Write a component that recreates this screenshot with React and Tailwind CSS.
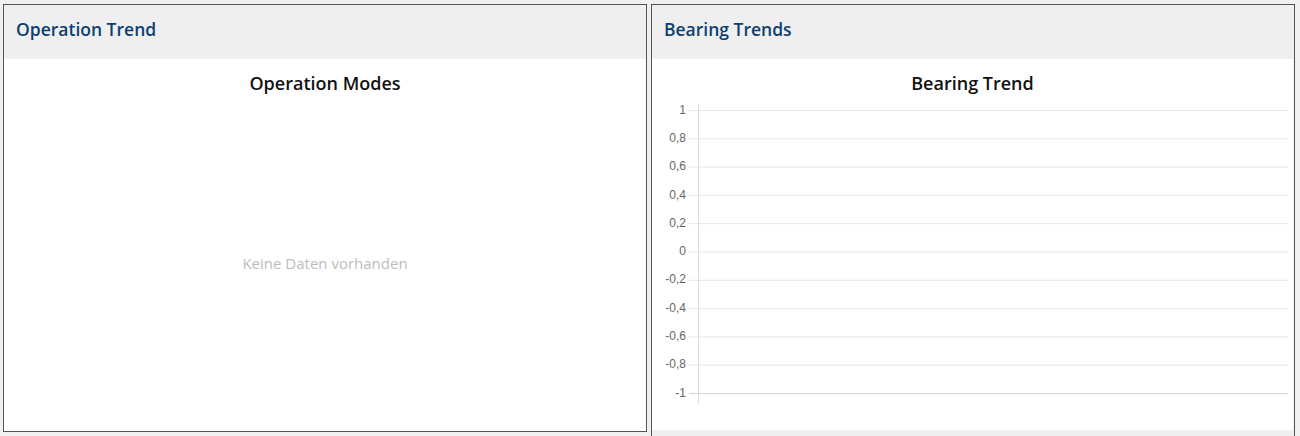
import React from "react";

const ticks = ["1", "0,8", "0,6", "0,4", "0,2", "0", "-0,2", "-0,4", "-0,6", "-0,8", "-1"];

function BearingChart() {
  return (
    <svg width="642" height="312" className="block">
      {ticks.map((t, i) => {
        const y = 10.5 + i * 28.3;
        return (
          <g key={t}>
            <line x1="37" x2="636" y1={y} y2={y} stroke={i === 10 ? "#d4d4d4" : "#e6e6e6"} strokeWidth="1" />
            <text
              x="34"
              y={y}
              textAnchor="end"
              dominantBaseline="middle"
              fill="#666"
              fontSize="12"
              fontFamily="'Liberation Sans', Arial, sans-serif"
            >
              {t}
            </text>
          </g>
        );
      })}
      <line x1="46.5" x2="46.5" y1="4" y2="304" stroke="#dcdcdc" strokeWidth="1" />
    </svg>
  );
}

function Card({ title, children, className }) {
  return (
    <div className={"w-[644px] border border-[#555] bg-[#efefef] flex flex-col " + className}>
      <div className="h-[54px] flex items-center px-[12px] pb-[6px] text-[17.5px] font-semibold text-[#0d3f72]">
        {title}
      </div>
      {children}
    </div>
  );
}

export default function App() {
  return (
    <div
      className="h-[436px] overflow-hidden bg-[#f0f0f0] flex gap-[4px] pl-[3px] pt-[4px]"
      style={{ fontFamily: "'Open Sans', 'Noto Sans', sans-serif" }}
    >
      <Card title="Operation Trend" className="h-[428px]">
        <div className="flex-1 bg-white flex flex-col">
          <div className="pt-[12px] text-center text-[18px] leading-[24px] font-semibold text-[#111]">
            Operation Modes
          </div>
          <div className="flex-1 flex items-center justify-center text-[15px] text-[#bdbdbd]">
            Keine Daten vorhanden
          </div>
        </div>
      </Card>
      <Card title="Bearing Trends" className="h-[440px]">
        <div className="h-[371px] bg-white mr-[1px] flex flex-col">
          <div className="pt-[12px] text-center text-[18px] leading-[24px] font-semibold text-[#111]">
            Bearing Trend
          </div>
          <div className="mt-[5px]">
            <BearingChart />
          </div>
        </div>
      </Card>
    </div>
  );
}
